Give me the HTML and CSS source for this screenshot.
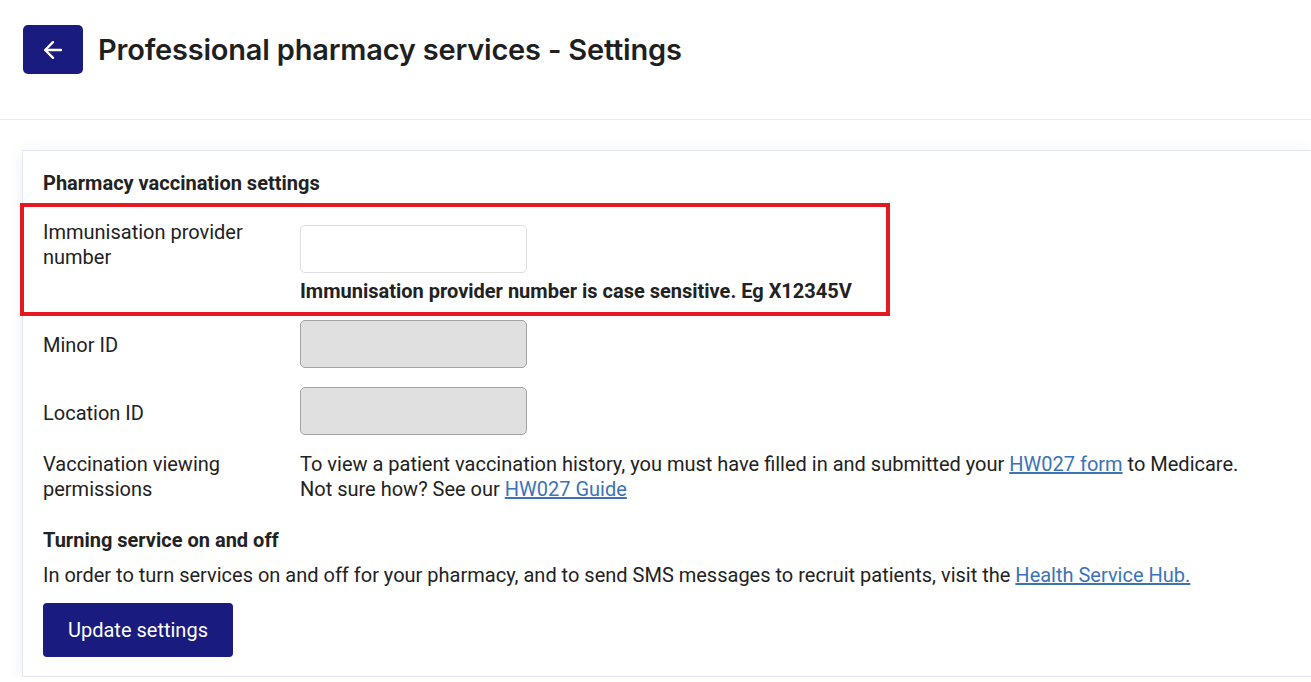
FILE: index.html
```html
<!DOCTYPE html>
<html lang="en">
<head>
<meta charset="utf-8">
<title>Professional pharmacy services - Settings</title>
<link rel="stylesheet" href="styles.css">
</head>
<body>
<header class="page-header">
  <button class="back-btn" aria-label="Back">
    <svg width="22" height="22" viewBox="0 0 22 22" fill="none" stroke="#fff" stroke-width="2.4" stroke-linecap="round" stroke-linejoin="round">
      <path d="M19 11H3.5"/>
      <path d="M11 3.2L3.2 11L11 18.8"/>
    </svg>
  </button>
  <h1 class="page-title">Professional pharmacy services - Settings</h1>
</header>
<main class="page-main">
  <section class="card">
    <h2 class="section-title">Pharmacy vaccination settings</h2>
    <div class="form-row row-top">
      <label class="field-label">Immunisation provider number</label>
      <div class="field">
        <input class="text-input" type="text">
        <p class="hint">Immunisation provider number is case sensitive. Eg X12345V</p>
      </div>
    </div>
    <div class="form-row row-center row-minor">
      <label class="field-label">Minor ID</label>
      <div class="field"><input class="text-input disabled" type="text" disabled></div>
    </div>
    <div class="form-row row-center row-location">
      <label class="field-label">Location ID</label>
      <div class="field"><input class="text-input disabled" type="text" disabled></div>
    </div>
    <div class="form-row row-top row-perm">
      <div class="field-label">Vaccination viewing permissions</div>
      <div class="field text">To view a patient vaccination history, you must have filled in and submitted your <a href="#">HW027 form</a> to Medicare.<br>Not sure how? See our <a href="#">HW027 Guide</a></div>
    </div>
    <h2 class="section-title sub">Turning service on and off</h2>
    <p class="para">In order to turn services on and off for your pharmacy, and to send SMS messages to recruit patients, visit the <a href="#">Health Service Hub.</a></p>
    <button class="primary-btn">Update settings</button>
    <div class="highlight"></div>
  </section>
</main>
</body>
</html>
```
FILE: styles.css
```css
* { box-sizing: border-box; }
html, body { margin: 0; padding: 0; background: #fff; overflow: hidden; }
body {
  font-family: Roboto, "Liberation Sans", Arial, sans-serif;
  color: #222;
  font-size: 20px;
  line-height: 25px;
}
.page-header {
  height: 120px;
  border-bottom: 1px solid #e8e9ee;
  display: flex;
  align-items: flex-start;
  padding: 25px 0 0 23px;
}
.back-btn {
  width: 60px;
  height: 49px;
  border: none;
  border-radius: 5px;
  background: #1a1b7e;
  display: flex;
  align-items: center;
  justify-content: center;
  padding: 0;
  margin: 0;
}
.page-title {
  margin: 0 0 0 15px;
  font-family: Inter, "Open Sans", sans-serif;
  font-weight: 600;
  font-size: 29px;
  line-height: 49px;
  color: #1f1f1f;
  letter-spacing: -0.2px;
}
.page-main {
  padding: 30px 0 0 22px;
}
.card {
  position: relative;
  border: 1px solid #e3e5f3;
  border-right: none;
  background: #fff;
  box-shadow: 0 3px 14px rgba(70, 80, 190, 0.10);
  padding: 20px 20px 19px 20px;
  height: 527px;
}
.section-title {
  margin: 0;
  font-size: 20px;
  font-weight: 700;
  line-height: 25px;
  color: #222;
}
.form-row {
  display: grid;
  grid-template-columns: 257px 1fr;
}
.row-top { align-items: start; margin-top: 24px; }
.row-center { align-items: center; }
.row-minor { margin-top: 16px; }
.row-location { margin-top: 19px; }
.row-perm { margin-top: 17px; }
.field-label {
  font-size: 20px;
  line-height: 25px;
  padding-right: 10px;
}
.row-center .field-label { padding-top: 3px; }
.row-location .field-label { padding-top: 5px; }
.text-input {
  display: block;
  width: 227px;
  height: 48px;
  border: 1px solid #dedede;
  border-radius: 5px;
  background: #fff;
  margin: 5px 0 0 0;
  padding: 0 12px;
  font: inherit;
}
.row-center .text-input { margin-top: 0; }
.text-input.disabled {
  background: #e0e0e0;
  border-color: #a3a3a3;
}
.hint {
  margin: 6px 0 0 0;
  font-weight: 700;
  font-size: 20px;
  line-height: 25px;
}
.field.text { line-height: 25px; }
a { color: #3b73b9; text-decoration: underline; }
.section-title.sub { margin-top: 26px; }
.para { margin: 10px 0 0 0; }
.primary-btn {
  margin-top: 15px;
  width: 190px;
  height: 54px;
  border: none;
  border-radius: 4px;
  background: #1a1b7e;
  color: #fff;
  font-family: Roboto, sans-serif;
  font-size: 20px;
  padding: 0;
}
.highlight {
  position: absolute;
  left: -3px;
  top: 52px;
  width: 870px;
  height: 113px;
  border: 4px solid #e4191f;
  pointer-events: none;
}
```
